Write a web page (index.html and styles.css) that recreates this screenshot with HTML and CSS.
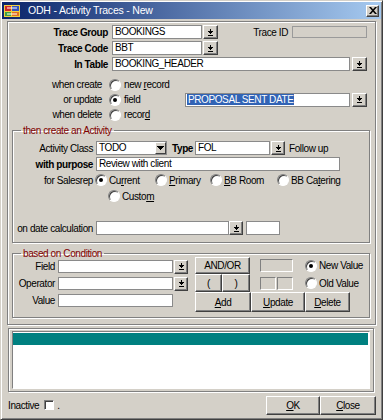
FILE: index.html
```html
<!DOCTYPE html>
<html lang="en">
<head>
<meta charset="utf-8">
<title>ODH - Activity Traces - New</title>
<link rel="stylesheet" href="styles.css">
</head>
<body>
<svg class="defs" width="0" height="0" aria-hidden="true">
  <symbol id="dd" viewBox="0 0 7 7"><rect x="3" y="0" width="1" height="2"/><rect x="1" y="2" width="5" height="1"/><rect x="2" y="3" width="3" height="1"/><rect x="3" y="4" width="1" height="1"/><rect x="1" y="6" width="5" height="1"/></symbol>
  <symbol id="tri" viewBox="0 0 7 4"><rect x="0" y="0" width="7" height="1"/><rect x="1" y="1" width="5" height="1"/><rect x="2" y="2" width="3" height="1"/><rect x="3" y="3" width="1" height="1"/></symbol>
</svg>
<div class="win">
  <div class="titlebar">
    <svg class="appicon" width="16" height="14" viewBox="0 0 16 14">
      <rect x="0" y="1" width="16" height="12" fill="#f0d040"/>
      <rect x="1" y="2" width="6" height="5" fill="#d02828"/>
      <rect x="8" y="2" width="7" height="5" fill="#3050c0"/>
      <rect x="1" y="8" width="6" height="4" fill="#40a040"/>
      <rect x="8" y="8" width="7" height="4" fill="#e07020"/>
      <path d="M3 4h10M3 10h10" stroke="#fff" stroke-width="1"/>
    </svg>
    <span class="ttext">ODH - Activity Traces - New</span>
    <span class="xbtn"><svg width="8" height="7" viewBox="0 0 8 7"><path d="M0 0h2l2 2.2L6 0h2L5 3.5 8 7H6L4 4.8 2 7H0l3-3.5z"/></svg></span>
  </div>

  <div class="main">
    <div class="row">
      <span class="lab b w99">Trace Group</span>
      <span class="inp w90">BOOKINGS</span>
      <span class="btn dd"><svg width="7" height="7"><use href="#dd"/></svg></span>
      <span class="lab w70">Trace ID</span>
      <span class="inp dis w75"></span>
    </div>
    <div class="row">
      <span class="lab b w99">Trace Code</span>
      <span class="inp w90">BBT</span>
      <span class="btn dd"><svg width="7" height="7"><use href="#dd"/></svg></span>
    </div>
    <div class="row">
      <span class="lab b w99">In Table</span>
      <span class="inp w238">BOOKING_HEADER</span>
      <span class="btn dd ml2"><svg width="7" height="7"><use href="#dd"/></svg></span>
    </div>

    <div class="radios">
      <div class="rrow">
        <span class="lab w93">when create</span>
        <span class="radio"></span>
        <span class="rtext">new <u>r</u>ecord</span>
      </div>
      <div class="rrow">
        <span class="lab w93">or update</span>
        <span class="radio on"></span>
        <span class="rtext w61">field</span>
        <span class="inp w165"><span class="sel">PROPOSAL SENT DATE</span></span>
        <span class="btn dd ml2"><svg width="7" height="7"><use href="#dd"/></svg></span>
      </div>
      <div class="rrow">
        <span class="lab w93">when delete</span>
        <span class="radio"></span>
        <span class="rtext">recor<u>d</u></span>
      </div>
    </div>

    <fieldset class="grp g1">
      <legend>then create an Activity</legend>
      <div class="row">
        <span class="lab w80">Activity Class</span>
        <span class="inp combo w71"><span class="ctext">TODO</span><span class="cbtn"><svg width="7" height="4"><use href="#tri"/></svg></span></span>
        <span class="b typel">Type</span>
        <span class="inp w75">FOL</span>
        <span class="btn dd w14"><svg width="7" height="7"><use href="#dd"/></svg></span>
        <span class="follow">Follow up</span>
      </div>
      <div class="row">
        <span class="lab b w80">with purpose</span>
        <span class="inp w244">Review with client</span>
      </div>
      <div class="row sales">
        <span class="lab w80 mr2">for Salesrep</span>
        <span class="ropt o1"><span class="radio on"></span><span class="rt">Cu<u>r</u>rent</span></span>
        <span class="ropt o2"><span class="radio"></span><span class="rt"><u>P</u>rimary</span></span>
        <span class="ropt o3"><span class="radio"></span><span class="rt"><u>B</u>B Room</span></span>
        <span class="ropt"><span class="radio"></span><span class="rt">BB Ca<u>t</u>ering</span></span>
      </div>
      <div class="row custom">
        <span class="ropt"><span class="radio"></span><span class="rt">Custo<u>m</u></span></span>
      </div>
      <div class="row datecalc">
        <span class="lab w80">on date calculation</span>
        <span class="inp w133"></span>
        <span class="btn dd w14 ml0"><svg width="7" height="7"><use href="#dd"/></svg></span>
        <span class="inp w34 ml3"></span>
      </div>
    </fieldset>

    <fieldset class="grp g2">
      <legend>based on Condition</legend>
      <div class="cond">
        <div class="fields">
          <div class="frow">
            <span class="lab w42">Field</span>
            <span class="inp w115 h13"></span>
            <span class="btn dd w14 h13"><svg width="7" height="7"><use href="#dd"/></svg></span>
          </div>
          <div class="frow">
            <span class="lab w42">Operator</span>
            <span class="inp w115 h13"></span>
            <span class="btn dd w14 h13"><svg width="7" height="7"><use href="#dd"/></svg></span>
          </div>
          <div class="frow">
            <span class="lab w42">Value</span>
            <span class="inp w115 h13"></span>
          </div>
        </div>
        <div class="ctrls">
          <div class="crow c1">
            <span class="tbtn w55">AND/OR</span>
            <span class="box bw33"></span>
            <span class="radio on rr"></span><span class="rt">New Value</span>
          </div>
          <div class="crow c2">
            <span class="tbtn w27">(</span><span class="tbtn w28">)</span>
            <span class="box bw16 ml10"></span><span class="box bw16 ml1"></span>
            <span class="radio rr"></span><span class="rt">Old Value</span>
          </div>
          <div class="crow c3">
            <span class="tbtn w56"><u>A</u>dd</span>
            <span class="tbtn w54"><u>U</u>pdate</span>
            <span class="tbtn w45"><u>D</u>elete</span>
          </div>
        </div>
      </div>
    </fieldset>
  </div>

  <div class="listframe">
    <div class="list">
      <div class="lhead"></div>
    </div>
  </div>

  <div class="footer">
    <span>Inactive</span>
    <span class="check"></span>
    <span class="dot">.</span>
    <span class="tbtn fb w54 ml-auto"><u>O</u>K</span>
    <span class="tbtn fb w56"><u>C</u>lose</span>
  </div>
</div>
</body>
</html>
```
FILE: styles.css
```css
*{box-sizing:border-box}
html,body{margin:0;padding:0;background:#d4d0c8}
body{font-family:"Liberation Sans",Arial,sans-serif;font-size:10px;letter-spacing:-0.4px;line-height:13px;color:#000}
.defs{position:absolute;width:0;height:0;overflow:hidden}
u{text-decoration:underline;text-underline-offset:1px}

.win{width:383px;height:420px;background:#d4d0c8;border:1px solid;border-color:#d4d0c8 #404040 #404040 #d4d0c8;box-shadow:inset 1px 1px 0 #fff,inset -1px -1px 0 #808080;padding:1px;display:flex;flex-direction:column}

.titlebar{height:17px;flex:none;background:linear-gradient(90deg,#0a246a,#a6caf0);display:flex;align-items:center;color:#fff;padding:0 2px 0 2px}
.appicon{flex:none;margin-right:8px}
.ttext{flex:1;white-space:nowrap;font-size:10.5px;letter-spacing:-0.2px}
.xbtn{width:13px;height:12px;background:#d4d0c8;border:1px solid;border-color:#fff #404040 #404040 #fff;box-shadow:inset -1px -1px 0 #808080;display:flex;align-items:center;justify-content:center}

.main{flex:none;margin:2px 0 0 5px;width:369px;height:304px;border:1px solid #808080;box-shadow:inset 1px 1px 0 #fff,1px 1px 0 #fff;padding:3px 0 0 1px;display:flex;flex-direction:column}

.row{display:flex;align-items:center;height:14px;margin-bottom:2px;flex:none}
.lab{flex:none;text-align:right;white-space:nowrap}
.b{font-weight:bold}
.w99{width:99px;margin-right:4px}
.w70{width:70px;margin-right:4px}
.w93{width:93px;margin-right:7px}
.w80{width:80px;margin-right:3px}
.w42{width:42px;margin-right:3px}
.mr2{margin-right:2px}

.inp{flex:none;height:14px;background:#fff;border:1px solid #8a8a8a;padding:0 2px;line-height:12px;white-space:nowrap;overflow:hidden;display:block}
.inp.dis{background:#d4d0c8;height:12px;border-color:#9a9a9a}
.w90{width:90px}.w75{width:75px}.w238{width:238px}.w165{width:165px}.w71{width:71px}
.w244{width:244px}.w133{width:133px}.w34{width:34px}.w115{width:115px}
.h13{height:13px}

.btn{flex:none;height:14px;width:15px;background:#d4d0c8;border:1px solid;border-color:#fff #404040 #404040 #fff;box-shadow:inset -1px -1px 0 #808080;display:flex;align-items:center;justify-content:center;margin-left:1px}
.btn svg{fill:#000;display:block}
.btn.w14{width:14px}
.ml2{margin-left:2px}.ml0{margin-left:0}.ml3{margin-left:3px}.ml1{margin-left:1px}.ml10{margin-left:10px}

.sel{background:#3163b5;color:#fff;padding:0 1px;margin-left:-1px}

.radios{margin-top:4px;display:flex;flex-direction:column}
.rrow{display:flex;align-items:center;height:15px}
.radio{flex:none;width:12px;height:12px;border-radius:50%;background:#fff;border:1px solid;border-color:#808080 #fff #fff #808080;box-shadow:inset 1px 1px 0 #404040;position:relative}
.radio.on::after{content:"";position:absolute;left:3px;top:3px;width:4px;height:4px;border-radius:50%;background:#000}
.rtext{margin-left:3px;white-space:nowrap}
.w61{width:61px;flex:none}

.grp{margin:2px 0 0 3px;width:358px;border:1px solid #808080;box-shadow:inset 1px 1px 0 #fff,1px 1px 0 #fff;padding:4px 0 5px 0;min-inline-size:0}
.grp legend{color:#800000;padding:0 2px;margin-left:8px;line-height:13px}
.g2{margin-top:4px;padding:0 0 5px 0}

.combo{display:flex;padding:0;justify-content:space-between}
.ctext{padding-left:2px}
.cbtn{width:11px;height:12px;background:#d4d0c8;border:1px solid;border-color:#fff #404040 #404040 #fff;display:flex;align-items:center;justify-content:center}
.cbtn svg{fill:#000;display:block}
.typel{flex:none;width:23px;margin-left:5px}
.follow{margin-left:4px;white-space:nowrap}

.sales{margin-top:2px}
.ropt{display:flex;align-items:center;flex:none;white-space:nowrap}
.ropt .rt{margin-left:2px}
.o1{width:60px}.o2{width:55px}.o3{width:67px}
.custom{margin-top:1px;padding-left:95px}
.datecalc{margin-top:18px}

.cond{display:flex;align-items:flex-start}
.fields{display:flex;flex-direction:column}
.frow{display:flex;align-items:center;height:13px;margin-bottom:4px}
.ctrls{margin-left:7px;margin-top:-3px;display:flex;flex-direction:column}
.crow{display:flex;align-items:center}
.c1{height:17px}.c2{height:18px}.c3{height:20px}
.tbtn{flex:none;height:100%;display:flex;align-items:center;justify-content:center;background:#d4d0c8;border:1px solid;border-color:#fff #404040 #404040 #fff;box-shadow:inset -1px -1px 0 #808080;white-space:nowrap}
.w55{width:55px}.w27{width:27px}.w28{width:28px}.w56{width:56px}.w54{width:54px}.w45{width:45px}
.box{flex:none;height:13px;border:1px solid;border-color:#808080 #fff #fff #808080}
.c1 .box{margin-left:10px}
.bw33{width:33px}.bw16{width:16px}
.rr{margin-left:12px}
.crow .rt{margin-left:2px;white-space:nowrap}

.listframe{flex:none;margin:3px 0 0 6px;width:366px;height:64px;border:1px solid #808080;box-shadow:inset 1px 1px 0 #fff,1px 1px 0 #fff;padding:2px 0 0 3px}
.list{width:358px;height:58px;background:#fff;border:1px solid;border-color:#808080 #fff #fff #808080;padding:1px 1px 0 0}
.lhead{height:12px;background:#008080}

.footer{flex:1;display:flex;align-items:center;padding:0 5px 0 6px}
.check{flex:none;width:10px;height:10px;background:#fff;border:1px solid;border-color:#808080 #fff #fff #808080;box-shadow:inset 1px 1px 0 #404040;margin-left:5px}
.dot{margin-left:3px}
.fb{height:19px}
.ml-auto{margin-left:auto}
```
